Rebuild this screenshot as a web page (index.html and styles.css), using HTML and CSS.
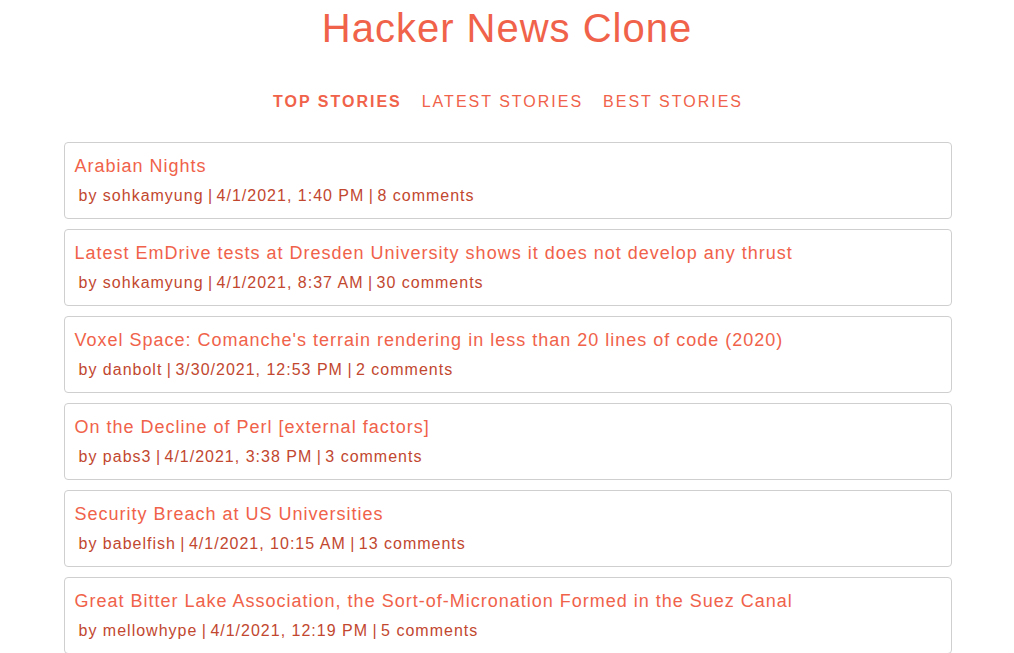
FILE: index.html
```html
<!DOCTYPE html>
<html lang="en">
<head>
<meta charset="utf-8">
<title>Hacker News Clone</title>
<link rel="stylesheet" href="styles.css">
</head>
<body>
<h1 class="app-title">Hacker News Clone</h1>
<nav class="nav">
  <a class="nav-link active" href="#">Top Stories</a>
  <a class="nav-link" href="#">Latest Stories</a>
  <a class="nav-link" href="#">Best Stories</a>
</nav>
<main class="stories">
  <div class="story">
    <a class="story-title" href="#">Arabian Nights</a>
    <div class="story-info">by sohkamyung<span class="sep"> | </span>4/1/2021, 1:40 PM<span class="sep"> | </span>8 comments</div>
  </div>
  <div class="story">
    <a class="story-title" href="#">Latest EmDrive tests at Dresden University shows it does not develop any thrust</a>
    <div class="story-info">by sohkamyung<span class="sep"> | </span>4/1/2021, 8:37 AM<span class="sep"> | </span>30 comments</div>
  </div>
  <div class="story">
    <a class="story-title" href="#">Voxel Space: Comanche's terrain rendering in less than 20 lines of code (2020)</a>
    <div class="story-info">by danbolt<span class="sep"> | </span>3/30/2021, 12:53 PM<span class="sep"> | </span>2 comments</div>
  </div>
  <div class="story">
    <a class="story-title" href="#">On the Decline of Perl [external factors]</a>
    <div class="story-info">by pabs3<span class="sep"> | </span>4/1/2021, 3:38 PM<span class="sep"> | </span>3 comments</div>
  </div>
  <div class="story">
    <a class="story-title" href="#">Security Breach at US Universities</a>
    <div class="story-info">by babelfish<span class="sep"> | </span>4/1/2021, 10:15 AM<span class="sep"> | </span>13 comments</div>
  </div>
  <div class="story">
    <a class="story-title" href="#">Great Bitter Lake Association, the Sort-of-Micronation Formed in the Suez Canal</a>
    <div class="story-info">by mellowhype<span class="sep"> | </span>4/1/2021, 12:19 PM<span class="sep"> | </span>5 comments</div>
  </div>
</main>
</body>
</html>
```
FILE: styles.css
```css
html, body {
  margin: 0;
  padding: 0;
  background: #fff;
}
body {
  font-family: "Liberation Sans", Arial, sans-serif;
  color: #f0624a;
}
.app-title {
  margin: 0;
  font-size: 40px;
  font-weight: normal;
  line-height: 56px;
  letter-spacing: 1px;
  text-align: center;
  color: #f0624a;
}
.nav {
  display: flex;
  justify-content: center;
  gap: 20px;
  margin-top: 36px;
  padding-left: 2px;
  line-height: 20px;
}
.nav-link {
  font-size: 16px;
  letter-spacing: 2px;
  text-transform: uppercase;
  text-decoration: none;
  color: #f0624a;
}
.nav-link.active {
  font-weight: bold;
}
.stories {
  width: 888px;
  margin: 30px auto 0;
  padding-left: 1px;
  display: flex;
  flex-direction: column;
  gap: 10px;
}
.story {
  border: 1px solid #cfcfcf;
  border-radius: 4px;
  padding: 8px 9px 8px 10px;
}
.story-title {
  display: block;
  font-size: 18px;
  line-height: 31px;
  letter-spacing: 1px;
  text-decoration: none;
  color: #f0624a;
}
.story-info {
  font-size: 16px;
  line-height: 28px;
  letter-spacing: 1px;
  margin-left: 4px;
  color: #c2472f;
}
.sep {
  letter-spacing: 0;
}
```
